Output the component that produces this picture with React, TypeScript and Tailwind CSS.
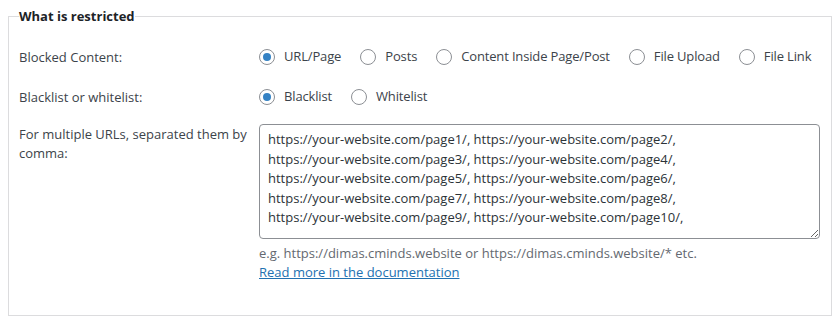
import { useState } from 'react';

const blockedOptions = ['URL/Page', 'Posts', 'Content Inside Page/Post', 'File Upload', 'File Link'];
const listOptions = ['Blacklist', 'Whitelist'];

const urls = [
  'https://your-website.com/page1/, https://your-website.com/page2/,',
  'https://your-website.com/page3/, https://your-website.com/page4/,',
  'https://your-website.com/page5/, https://your-website.com/page6/,',
  'https://your-website.com/page7/, https://your-website.com/page8/,',
  'https://your-website.com/page9/, https://your-website.com/page10/,',
].join('\n');

function Radio({ label, checked, onClick }: { label: string; checked: boolean; onClick: () => void }) {
  return (
    <label className="flex shrink-0 items-center gap-[9px] cursor-pointer whitespace-nowrap" onClick={onClick}>
      <span className="w-4 h-4 shrink-0 rounded-full border border-[#8c8f94] bg-white flex items-center justify-center">
        {checked && <span className="w-2 h-2 rounded-full bg-[#3582c4]" />}
      </span>
      <span className="tracking-[-0.15px]">{label}</span>
    </label>
  );
}

function App() {
  const [blocked, setBlocked] = useState('URL/Page');
  const [list, setList] = useState('Blacklist');

  return (
    <div className="w-[840px] h-[330px] bg-white text-[#3c434a] text-[13px] pt-[7px]" style={{ fontFamily: '"Open Sans", "Noto Sans", sans-serif' }}>
      <fieldset className="mx-2 h-[309px] border border-[#dcdcde] px-[10px]">
        <legend className="font-bold text-[#1d2327] leading-[19px]">What is restricted</legend>

        <div className="grid grid-cols-[240px_1fr] pt-3">
          <div className="leading-5 pt-[9px]">Blocked Content:</div>
          <div className="flex items-center gap-[19px] h-[38px]">
            {blockedOptions.map((o) => (
              <Radio key={o} label={o} checked={blocked === o} onClick={() => setBlocked(o)} />
            ))}
          </div>

          <div className="leading-5 pt-[11px]">Blacklist or whitelist:</div>
          <div className="flex items-center gap-[19px] h-[42px]">
            {listOptions.map((o) => (
              <Radio key={o} label={o} checked={list === o} onClick={() => setList(o)} />
            ))}
          </div>

          <div className="leading-[19px] pt-[7px] pr-2">For multiple URLs, separated them by comma:</div>
          <div className="pt-[6px]">
            <textarea
              className="block w-[561px] h-[115px] border border-[#8c8f94] rounded-[4px] px-2 py-[5px] leading-[19.5px] text-[#2c3338] whitespace-pre overflow-hidden outline-none"
              defaultValue={urls}
              wrap="off"
            />
            <p className="mt-[5px] text-[#646970] leading-[19px]">
              e.g. https://dimas.cminds.website or https://dimas.cminds.website/* etc.
            </p>
            <a href="#" className="text-[#2271b1] underline leading-[19px]">Read more in the documentation</a>
          </div>
        </div>
      </fieldset>
    </div>
  );
}

export default App;
